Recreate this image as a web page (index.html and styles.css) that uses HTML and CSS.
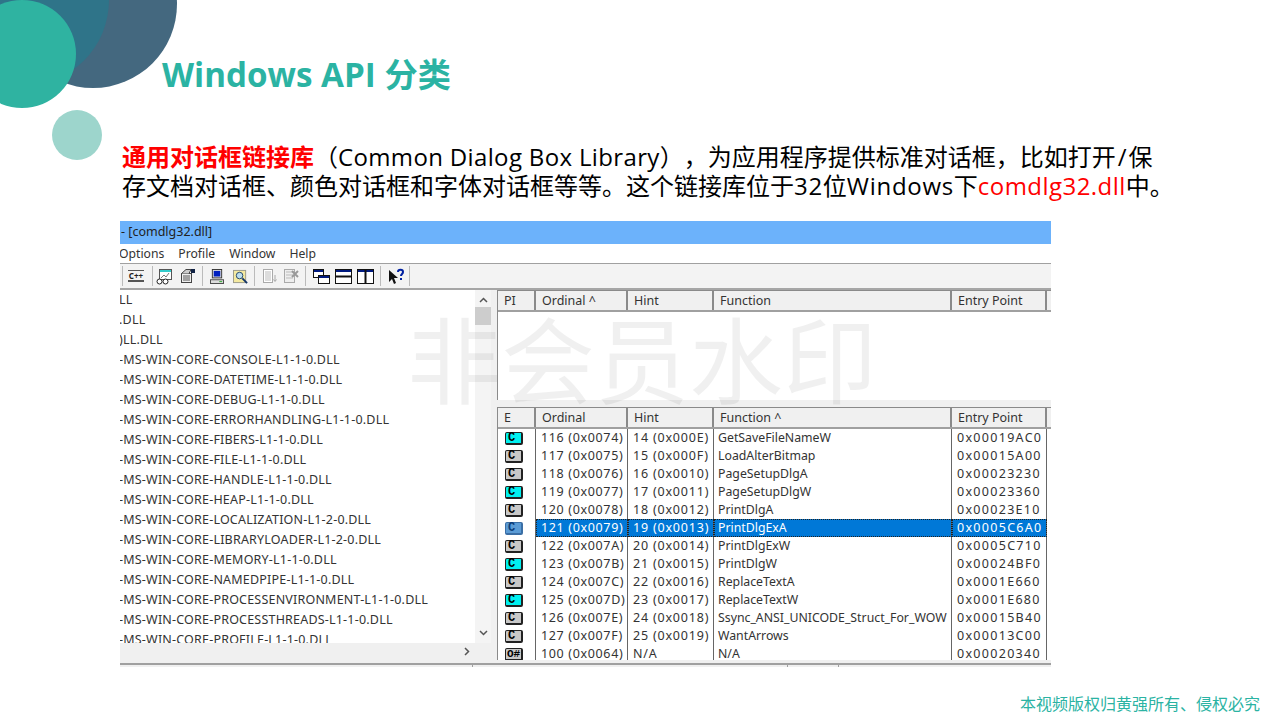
FILE: index.html
```html
<!DOCTYPE html>
<html lang="zh-CN">
<head>
  <meta charset="UTF-8" />
  <title>Windows API 分类</title>
  <link rel="stylesheet" href="styles.css">
</head>
<body>
<div class="slide">
  <!-- 装饰圆 -->
  <div class="circle circle-dark"></div>
  <div class="circle circle-mid"></div>
  <div class="circle circle-teal"></div>
  <div class="circle circle-light"></div>

  <h1 class="title">Windows API 分类</h1>

  <p class="intro"><b class="hl">通用对话框链接库</b>（<span class="lib">Common Dialog Box Library</span>），为应用程序提供标准对话框，比如打开<span class="slash">/</span>保<br>存文档对话框、颜色对话框和字体对话框等等。这个链接库位于<span class="en">32</span>位<span class="en">Windows</span>下<span class="red">comdlg32.dll</span>中。</p>

  <div class="window">
    <div class="titlebar">- [comdlg32.dll]</div>
    <div class="menubar">
      <span class="menu-first">Options</span><span>Profile</span><span>Window</span><span>Help</span>
    </div>
    <div class="toolbar">
      <i class="sep sep-first"></i>
      <span class="cpp">C++</span>
      <i class="sep sep-tight"></i>
      <svg class="tool" width="17" height="17" viewBox="0 0 17 17"><rect x="3.5" y="1.5" width="12" height="10" fill="#fff" stroke="#555"/><rect x="4" y="2" width="11" height="2" fill="#3cc"/><path d="M5 10l3-3 2 2 3-4" fill="none" stroke="#777"/><circle cx="3.5" cy="13.5" r="2.5" fill="#fff" stroke="#222"/><circle cx="9.5" cy="13.5" r="2.5" fill="#fff" stroke="#222"/></svg>
      <svg class="tool gap-m" width="16" height="16" viewBox="0 0 16 16"><rect x="1.5" y="5.5" width="10" height="9" fill="#eee" stroke="#444"/><path d="M3 8h7M3 10h7M3 12h7" stroke="#555"/><path d="M1.5 5.5L6 1.5h5l-2 4" fill="#ccc" stroke="#444"/><rect x="11" y="1" width="4" height="4" fill="#124"/></svg>
      <i class="sep"></i>
      <svg class="tool" width="14" height="15" viewBox="0 0 15 16"><rect x="2.5" y="0.5" width="10" height="9" fill="#ddd" stroke="#333"/><rect x="4" y="2" width="7" height="6" fill="#0020c0"/><rect x="0.5" y="11.5" width="14" height="4" fill="#ddd" stroke="#444"/><rect x="10" y="13" width="3" height="1" fill="#2a2"/></svg>
      <svg class="tool gap-l" width="15" height="15" viewBox="0 0 16 16"><rect x="0.5" y="1.5" width="13" height="13" fill="#f4e9a0" stroke="#998"/><circle cx="7" cy="7" r="3.5" fill="#bde" stroke="#246"/><path d="M10 10l5 5" stroke="#136" stroke-width="2"/></svg>
      <i class="sep"></i>
      <svg class="tool" width="16" height="16" viewBox="0 0 16 16"><rect x="1.5" y="1.5" width="9" height="13" fill="#fff" stroke="#aaa"/><path d="M3 4h6M3 6h6M3 8h6M3 10h6M3 12h6" stroke="#bbb"/><path d="M13 7v6M11.5 11.5l1.5 2 1.5-2" fill="none" stroke="#aaa"/></svg>
      <svg class="tool gap-s" width="16" height="16" viewBox="0 0 16 16"><rect x="1.5" y="1.5" width="10" height="13" fill="#eee" stroke="#aaa"/><path d="M3 4h7M3 7h7M3 10h7" stroke="#bbb"/><path d="M9 3l6 6M15 3l-6 6" stroke="#999" stroke-width="2"/></svg>
      <i class="sep"></i>
      <svg class="tool" width="17" height="15" viewBox="0 0 17 15"><rect x="0.5" y="0.5" width="10" height="8" fill="#fff" stroke="#111"/><rect x="1" y="1" width="9" height="2" fill="#001a80"/><rect x="5.5" y="6.5" width="11" height="8" fill="#fff" stroke="#111"/><rect x="6" y="7" width="10" height="2" fill="#001a80"/></svg>
      <svg class="tool gap-s" width="17" height="15" viewBox="0 0 17 15"><rect x="0.5" y="0.5" width="16" height="14" fill="#fff" stroke="#111"/><rect x="1" y="1" width="15" height="2" fill="#001a80"/><path d="M0 7.5h17" stroke="#111" stroke-width="2"/></svg>
      <svg class="tool gap-s" width="17" height="15" viewBox="0 0 17 15"><rect x="0.5" y="0.5" width="16" height="14" fill="#fff" stroke="#111"/><rect x="1" y="1" width="15" height="2" fill="#001a80"/><path d="M8.5 0v15" stroke="#111" stroke-width="2"/></svg>
      <i class="sep"></i>
      <svg class="tool" width="17" height="17" viewBox="0 0 17 17"><path d="M1 2v12l3-3 2 5 2-1-2-5h4z" fill="#111"/><path d="M10 4c0-3 5-3 5 0 0 2-2 2-2 4M13 10v2" fill="none" stroke="#0020a0" stroke-width="2"/></svg>
      <i class="sep sep-last"></i>
    </div>

    <div class="panes">
      <div class="left-pane">
        <div class="list-area">
          <ul class="dll-list">
            <li>LL</li>
            <li>.DLL</li>
            <li>)LL.DLL</li>
            <li>-MS-WIN-CORE-CONSOLE-L1-1-0.DLL</li>
            <li>-MS-WIN-CORE-DATETIME-L1-1-0.DLL</li>
            <li>-MS-WIN-CORE-DEBUG-L1-1-0.DLL</li>
            <li>-MS-WIN-CORE-ERRORHANDLING-L1-1-0.DLL</li>
            <li>-MS-WIN-CORE-FIBERS-L1-1-0.DLL</li>
            <li>-MS-WIN-CORE-FILE-L1-1-0.DLL</li>
            <li>-MS-WIN-CORE-HANDLE-L1-1-0.DLL</li>
            <li>-MS-WIN-CORE-HEAP-L1-1-0.DLL</li>
            <li>-MS-WIN-CORE-LOCALIZATION-L1-2-0.DLL</li>
            <li>-MS-WIN-CORE-LIBRARYLOADER-L1-2-0.DLL</li>
            <li>-MS-WIN-CORE-MEMORY-L1-1-0.DLL</li>
            <li>-MS-WIN-CORE-NAMEDPIPE-L1-1-0.DLL</li>
            <li>-MS-WIN-CORE-PROCESSENVIRONMENT-L1-1-0.DLL</li>
            <li>-MS-WIN-CORE-PROCESSTHREADS-L1-1-0.DLL</li>
            <li>-MS-WIN-CORE-PROFILE-L1-1-0.DLL</li>
          </ul>
          <div class="vscroll">
            <svg width="9" height="6" viewBox="0 0 9 6"><path d="M1 5l3.5-3.5L8 5" fill="none" stroke="#555" stroke-width="1.5"/></svg>
            <div class="vthumb"></div>
            <svg class="arrow-down" width="9" height="6" viewBox="0 0 9 6"><path d="M1 1l3.5 3.5L8 1" fill="none" stroke="#555" stroke-width="1.5"/></svg>
          </div>
        </div>
        <div class="hscroll">
          <svg width="6" height="9" viewBox="0 0 6 9"><path d="M1 1l3.5 3.5L1 8" fill="none" stroke="#555" stroke-width="1.5"/></svg>
        </div>
      </div>

      <div class="right-pane">
        <div class="table table-top">
          <div class="row head">
            <span class="c-flag">PI</span><span class="c-ord">Ordinal ^</span><span class="c-hint">Hint</span><span class="c-func">Function</span><span class="c-entry">Entry Point</span>
          </div>
        </div>
        <div class="splitter"></div>
        <div class="table table-bottom">
          <div class="row head">
            <span class="c-flag">E</span><span class="c-ord">Ordinal</span><span class="c-hint">Hint</span><span class="c-func">Function ^</span><span class="c-entry">Entry Point</span>
          </div>
          <div class="rows">
            <div class="row"><span class="c-flag"><b class="badge on">C</b></span><span class="c-ord num">116 (0x0074)</span><span class="c-hint num">14 (0x000E)</span><span class="c-func">GetSaveFileNameW</span><span class="c-entry num">0x00019AC0</span></div>
            <div class="row"><span class="c-flag"><b class="badge">C</b></span><span class="c-ord num">117 (0x0075)</span><span class="c-hint num">15 (0x000F)</span><span class="c-func">LoadAlterBitmap</span><span class="c-entry num">0x00015A00</span></div>
            <div class="row"><span class="c-flag"><b class="badge">C</b></span><span class="c-ord num">118 (0x0076)</span><span class="c-hint num">16 (0x0010)</span><span class="c-func">PageSetupDlgA</span><span class="c-entry num">0x00023230</span></div>
            <div class="row"><span class="c-flag"><b class="badge on">C</b></span><span class="c-ord num">119 (0x0077)</span><span class="c-hint num">17 (0x0011)</span><span class="c-func">PageSetupDlgW</span><span class="c-entry num">0x00023360</span></div>
            <div class="row"><span class="c-flag"><b class="badge">C</b></span><span class="c-ord num">120 (0x0078)</span><span class="c-hint num">18 (0x0012)</span><span class="c-func">PrintDlgA</span><span class="c-entry num">0x00023E10</span></div>
            <div class="row selected"><span class="c-flag"><b class="badge sel">C</b></span><span class="c-ord num">121 (0x0079)</span><span class="c-hint num">19 (0x0013)</span><span class="c-func">PrintDlgExA</span><span class="c-entry num">0x0005C6A0</span></div>
            <div class="row"><span class="c-flag"><b class="badge">C</b></span><span class="c-ord num">122 (0x007A)</span><span class="c-hint num">20 (0x0014)</span><span class="c-func">PrintDlgExW</span><span class="c-entry num">0x0005C710</span></div>
            <div class="row"><span class="c-flag"><b class="badge on">C</b></span><span class="c-ord num">123 (0x007B)</span><span class="c-hint num">21 (0x0015)</span><span class="c-func">PrintDlgW</span><span class="c-entry num">0x00024BF0</span></div>
            <div class="row"><span class="c-flag"><b class="badge">C</b></span><span class="c-ord num">124 (0x007C)</span><span class="c-hint num">22 (0x0016)</span><span class="c-func">ReplaceTextA</span><span class="c-entry num">0x0001E660</span></div>
            <div class="row"><span class="c-flag"><b class="badge on">C</b></span><span class="c-ord num">125 (0x007D)</span><span class="c-hint num">23 (0x0017)</span><span class="c-func">ReplaceTextW</span><span class="c-entry num">0x0001E680</span></div>
            <div class="row"><span class="c-flag"><b class="badge">C</b></span><span class="c-ord num">126 (0x007E)</span><span class="c-hint num">24 (0x0018)</span><span class="c-func">Ssync_ANSI_UNICODE_Struct_For_WOW</span><span class="c-entry num">0x00015B40</span></div>
            <div class="row"><span class="c-flag"><b class="badge">C</b></span><span class="c-ord num">127 (0x007F)</span><span class="c-hint num">25 (0x0019)</span><span class="c-func">WantArrows</span><span class="c-entry num">0x00013C00</span></div>
            <div class="row"><span class="c-flag"><b class="badge ord">O#</b></span><span class="c-ord num">100 (0x0064)</span><span class="c-hint num">N/A</span><span class="c-func">N/A</span><span class="c-entry num">0x00020340</span></div>
          </div>
        </div>
      </div>
    </div>
    <div class="statusbar">
      <i class="cell cell-1"></i><i class="cell cell-2"></i><i class="cell cell-3"></i><i class="cell cell-4"></i>
    </div>
    <div class="watermark">非会员水印</div>
  </div>

  <div class="footer">本视频版权归黄强所有、侵权必究</div>
</div>
</body>
</html>
```

FILE: styles.css
```css
body {
  margin: 0;
  background: #fff;
  font-family: "Open Sans", "Noto Sans CJK SC", sans-serif;
}

.slide {
  position: relative;
  width: 1280px;
  height: 720px;
  padding: 51px 0 0 120px;
  box-sizing: border-box;
  overflow: hidden;
  background: #fff;
}

/* 装饰圆 */
.circle {
  position: absolute;
  border-radius: 50%;
}

.circle-dark {
  left: 9px;
  top: -80px;
  width: 168px;
  height: 168px;
  background: #44687f;
}

.circle-mid {
  left: -63px;
  top: -86px;
  width: 172px;
  height: 172px;
  background: #2f7489;
}

.circle-teal {
  left: -32px;
  top: 0;
  width: 108px;
  height: 108px;
  background: #2fb3a1;
}

.circle-light {
  left: 52px;
  top: 110px;
  width: 50px;
  height: 50px;
  background: #9dd5cc;
}

.title {
  position: relative;
  margin: 0 0 0 42px;
  height: 48px;
  font-size: 33.2px;
  line-height: 48px;
  font-weight: 700;
  color: #2bb3a3;
}

.intro {
  margin: 43px 0 0 2px;
  font-size: 24px;
  line-height: 29px;
  color: #000;
  white-space: nowrap;
  text-spacing-trim: space-all;
}

.hl {
  color: #ff0000;
}

.en {
  letter-spacing: 0.7px;
}

.lib {
  letter-spacing: 0.35px;
}

.slash {
  padding: 0 2px;
}

.red {
  color: #ff0000;
  letter-spacing: 0.45px;
}

/* 截图窗口 */
.window {
  position: relative;
  width: 931px;
  height: 446px;
  margin-top: 21px;
  display: flex;
  flex-direction: column;
  font-family: "Noto Sans", sans-serif;
  font-size: 12.5px;
  color: #333;
  overflow: hidden;
}

.titlebar {
  height: 23px;
  line-height: 22px;
  padding-left: 1px;
  background: #6cb2fb;
  color: #222;
}

.menubar {
  height: 20px;
  line-height: 20px;
  display: flex;
  gap: 14px;
  font-size: 12.2px;
  background: #fff;
  border-bottom: 1px solid #a0a0a0;
  box-sizing: border-box;
}

.menu-first {
  margin-left: -1px;
}

.toolbar {
  height: 26px;
  display: flex;
  align-items: center;
  background: #f3f3f3;
  border-bottom: 2px solid #a6a6a6;
  box-sizing: border-box;
}

.sep {
  flex: none;
  width: 1px;
  height: 20px;
  margin: 0 7px 0 6px;
  background: #bbb;
}

.sep-first {
  margin: 0 5px 0 2px;
}

.sep-tight {
  margin-left: 7px;
  margin-right: 3px;
}

.sep-last {
  margin-left: 4px;
}

.cpp {
  flex: none;
  width: 16px;
  margin-right: 1px;
  border-top: 1px solid #555;
  border-bottom: 2px solid #555;
  font-size: 8px;
  font-weight: 700;
  line-height: 9px;
  text-align: center;
  color: #222;
}

.tool {
  flex: none;
}

.gap-s { margin-left: 5px; }
.gap-m { margin-left: 7px; }
.gap-l { margin-left: 9px; }

.panes {
  flex: 1;
  display: flex;
  min-height: 0;
  background: #f0f0f0;
}

.left-pane {
  width: 371px;
  display: flex;
  flex-direction: column;
}

.list-area {
  flex: 1;
  min-height: 0;
  display: flex;
  background: #fff;
  overflow: hidden;
}

.dll-list {
  flex: 1;
  min-width: 0;
  margin: 0;
  padding: 0;
  list-style: none;
  overflow: hidden;
}

.dll-list li {
  height: 20px;
  line-height: 20px;
  margin-left: -1px;
  letter-spacing: 0.2px;
  white-space: nowrap;
}

.vscroll {
  width: 16px;
  padding-top: 7px;
  display: flex;
  flex-direction: column;
  align-items: center;
  background: #f4f4f4;
  box-sizing: border-box;
}

.vthumb {
  width: 16px;
  height: 18px;
  margin-top: 4px;
  background: #cdcdcd;
}

.arrow-down {
  margin-top: auto;
  margin-bottom: 7px;
}

.hscroll {
  height: 17px;
  padding-right: 21px;
  display: flex;
  align-items: center;
  justify-content: flex-end;
  background: #f0f0f0;
}

.right-pane {
  flex: 1;
  min-width: 0;
  margin-left: 6px;
  display: flex;
  flex-direction: column;
  background: #fff;
}

.table-top {
  height: 110px;
  background: #fff;
  border-top: 1px solid #8a8a8a;
  border-left: 1px solid #8a8a8a;
  box-sizing: border-box;
}

.splitter {
  height: 7px;
  background: #f0f0f0;
}

.table-bottom {
  flex: 1;
  min-height: 0;
  border-top: 1px solid #8a8a8a;
  border-left: 1px solid #8a8a8a;
  box-sizing: border-box;
  overflow: hidden;
}

.row {
  display: flex;
  height: 18px;
  line-height: 18px;
  white-space: nowrap;
}

.row > span {
  flex: none;
  box-sizing: border-box;
  padding-left: 5px;
  border-right: 1px solid #666;
  overflow: hidden;
}

.c-flag { width: 38px; }
.c-ord { width: 92px; }
.c-hint { width: 86px; }
.c-func { width: 238px; }
.c-entry { width: 95px; }

.row.head {
  height: 21px;
  line-height: 19px;
  background: #f0f0f0;
  border-bottom: 2px solid #a0a0a0;
  box-sizing: border-box;
}

.row.head > span {
  padding-left: 6px;
  border-right: 2px solid #8a8a8a;
}

.num {
  letter-spacing: 0.8px;
}

.c-ord.num {
  letter-spacing: 0.65px;
}

.c-entry.num {
  letter-spacing: 1.3px;
}

.rows .c-func {
  padding-left: 4px;
  font-size: 12.3px;
}

.row > .c-flag {
  display: flex;
  align-items: center;
  padding-left: 4px;
}

.row.head > .c-flag {
  display: block;
}

.badge {
  width: 18px;
  height: 13px;
  margin-left: 3px;
  border: 1px solid #222;
  border-right-width: 2px;
  border-bottom-width: 2px;
  border-radius: 2px;
  box-sizing: border-box;
  background: #c8c8c8;
  font-family: "Liberation Mono", monospace;
  font-size: 12px;
  line-height: 10px;
  text-indent: 2px;
  color: #000;
}

.badge.on {
  background: #00f0f0;
}

.badge.sel {
  background: #5b9bd5;
  border-color: #3a6ea5;
  color: #0a3c78;
}

.badge.ord {
  font-size: 11px;
  text-indent: 0;
  text-align: center;
}

.selected > span:not(.c-flag) {
  background: #0078d7;
  color: #fff;
  outline: 1px dotted #222;
  outline-offset: -1px;
}

.statusbar {
  flex: none;
  height: 7px;
  padding-top: 3px;
  display: flex;
  background: #f0f0f0;
  box-sizing: border-box;
}

.cell {
  height: 4px;
  border-top: 2px solid #a0a0a0;
  border-right: 1px solid #a0a0a0;
  box-sizing: border-box;
}

.cell-1 { width: 353px; }
.cell-2 { width: 315px; }
.cell-3 { width: 51px; }
.cell-4 { flex: 1; border-right: none; }

.watermark {
  position: absolute;
  left: 287px;
  top: 80px;
  font-family: "Noto Sans CJK SC", sans-serif;
  font-size: 94px;
  line-height: 110px;
  font-weight: 400;
  color: rgba(0, 0, 0, 0.06);
  white-space: nowrap;
  pointer-events: none;
}

.footer {
  position: absolute;
  right: 20px;
  bottom: 5px;
  font-family: "Noto Sans CJK SC", sans-serif;
  font-size: 16px;
  line-height: 24px;
  color: #2bb3a3;
}
```
